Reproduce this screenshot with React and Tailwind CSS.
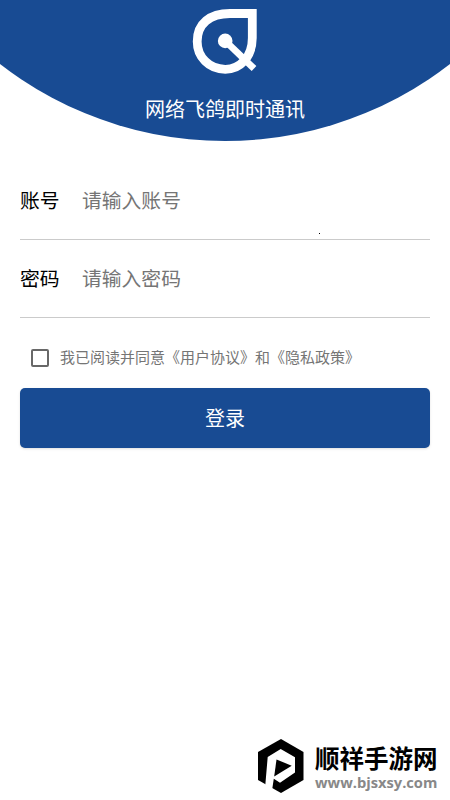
import React, { useState } from "react";

const FIELDS = [
  { id: "account", label: "账号", placeholder: "请输入账号", type: "text" },
  { id: "password", label: "密码", placeholder: "请输入密码", type: "password" },
];

function Logo() {
  return (
    <svg className="w-[66px] h-[66px]" viewBox="0 0 66 66" fill="none">
      <path
        d="M60.3 5.500V30C60.3 49 48 61.300 33.300 61.300C17 61.300 5.200 49 5.200 33.500C5.200 15.500 18 5.500 38 5.500Z"
        stroke="white"
        strokeWidth="8.8"
      />
      <circle cx="33.2" cy="32.9" r="7.3" fill="white" />
      <path d="M33.2 32.900L62 60.500" stroke="white" strokeWidth="6.8" />
    </svg>
  );
}

function Field({ field }) {
  return (
    <div className="flex items-center h-[78.5px] border-b border-[#cbcbcb]">
      <label htmlFor={field.id} className="w-[62px] text-[19.8px] text-black">
        {field.label}
      </label>
      <input
        id={field.id}
        type={field.type}
        placeholder={field.placeholder}
        className="flex-1 min-w-0 text-[19.8px] outline-none placeholder:text-[#757575]"
      />
    </div>
  );
}

function Watermark() {
  return (
    <div className="flex items-start mt-auto ml-[258px] h-[61px]">
      <svg className="w-[46px] h-[55px] shrink-0" viewBox="0 0 46 55">
        <path d="M23 0L45.500 13V41L23 54L0 41V13Z" fill="black" />
        <path
          d="M7.300 46L9.700 18L22.700 10L37 18.300V33.500L22 43.700L15.800 39.700L14 51.500L7 54Z"
          fill="white"
        />
        <path d="M18.500 20.500L33.700 26.700L16.200 37.500Z" fill="black" />
      </svg>
      <div className="ml-[11px] pt-[4px] whitespace-nowrap">
        <p className="text-[24.5px] leading-[30px] font-bold text-black">
          顺祥手游网
        </p>
        <p className="mt-px font-['Open_Sans',sans-serif] text-[14.7px] leading-[16px] font-bold text-[#888]">
          www.bjsxsy.com
        </p>
      </div>
    </div>
  );
}

export default function App() {
  const [agreed, setAgreed] = useState(false);

  return (
    <div className="relative flex flex-col w-[450px] h-[800px] overflow-hidden bg-white font-['Noto_Sans_CJK_SC',sans-serif]">
      <header className="flex flex-col items-center h-[141px] pt-2 bg-[#184b93] [clip-path:circle(367px_at_50%_-226px)]">
        <Logo />
        <h1 className="mt-5 text-[20px] leading-[30px] text-white">
          网络飞鸽即时通讯
        </h1>
      </header>

      <form className="px-5 pt-5" onSubmit={(e) => e.preventDefault()}>
        {FIELDS.map((field) => (
          <Field key={field.id} field={field} />
        ))}

        <label className="flex items-center h-[70px] pt-[9px] pl-[11px] text-[15px] text-[#757575]">
          <input
            type="checkbox"
            checked={agreed}
            onChange={(e) => setAgreed(e.target.checked)}
            className="appearance-none w-[18px] h-[18px] mr-[11px] border-2 border-[#686868] rounded-[2px] checked:bg-[#184b93]"
          />
          我已阅读并同意《用户协议》和《隐私政策》
        </label>

        <button
          type="submit"
          className="w-full h-[60px] rounded-[5px] bg-[#184b93] text-[20px] text-white shadow"
        >
          登录
        </button>
      </form>

      <span className="absolute left-[319px] top-[233px] w-px h-px bg-black" />

      <Watermark />
    </div>
  );
}
